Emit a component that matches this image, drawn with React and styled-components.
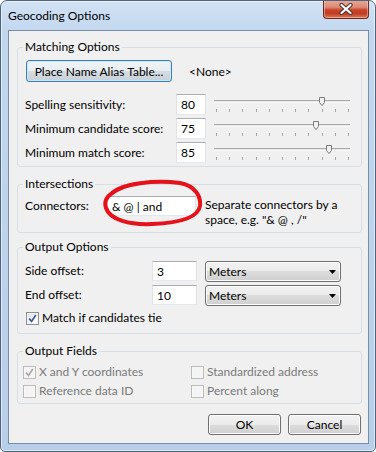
import React from "react";
import styled, { createGlobalStyle } from "styled-components";

const GlobalStyle = createGlobalStyle`
  html, body {
    margin: 0;
    padding: 0;
    background: #ffffff;
  }
  body {
    font-family: Lato, "Liberation Sans", Arial, sans-serif;
    font-size: 12px;
    color: #000;
  }
  *, *::before, *::after {
    box-sizing: border-box;
  }
`;

const sliders = [
  { label: "Spelling sensitivity:", value: 80 },
  { label: "Minimum candidate score:", value: 75 },
  { label: "Minimum match score:", value: 85 },
];

const offsets = [
  { label: "Side offset:", value: "3", unit: "Meters" },
  { label: "End offset:", value: "10", unit: "Meters" },
];

const fields = [
  { label: "X and Y coordinates", checked: true },
  { label: "Standardized address", checked: false },
  { label: "Reference data ID", checked: false },
  { label: "Percent along", checked: false },
];

function CheckBox({ checked, disabled }) {
  return (
    <Box $disabled={disabled}>
      {checked && (
        <svg width="9" height="9" viewBox="0 0 9 9">
          <path
            d="M1.2 4.6 L3.6 7.4 L7.8 1"
            fill="none"
            stroke={disabled ? "#a9a9a9" : "#3d5a98"}
            strokeWidth="1.7"
          />
        </svg>
      )}
    </Box>
  );
}

function Slider({ value }) {
  return (
    <SliderBody>
      <Track />
      <Ticks>
        {Array.from({ length: 11 }).map((_, i) => (
          <Tick key={i} />
        ))}
      </Ticks>
      <Thumb style={{ left: 2 + (value / 100) * 133 - 3 }}>
        <svg width="6" height="9" viewBox="0 0 6 9">
          <path
            d="M0.5 0.5 H5.5 V5.5 L3 8.5 L0.5 5.5 Z"
            fill="#f1f1f1"
            stroke="#7a7a7a"
            strokeWidth="1"
          />
        </svg>
      </Thumb>
    </SliderBody>
  );
}

export default function App() {
  return (
    <>
      <GlobalStyle />
      <Window>
        <TitleBar>
          <Title>Geocoding Options</Title>
          <CloseButton aria-label="Close">
            <svg width="14" height="12" viewBox="0 0 14 12">
              <path
                d="M2.5 2 L11.5 10 M11.5 2 L2.5 10"
                stroke="#4a3330"
                strokeWidth="4.2"
                strokeLinecap="round"
              />
              <path
                d="M2.5 2 L11.5 10 M11.5 2 L2.5 10"
                stroke="#ffffff"
                strokeWidth="2.2"
                strokeLinecap="round"
              />
            </svg>
          </CloseButton>
        </TitleBar>
        <Client>
          <Group $mt={8} $pt={5} $pb={3}>
            <Legend>Matching Options</Legend>
            <AliasRow>
              <Button $w={146} $h={22} $focused>
                Place Name Alias Table...
              </Button>
              <span>&lt;None&gt;</span>
            </AliasRow>
            {sliders.map((s, i) => (
              <SliderRow key={s.label} $mt={i === 0 ? 12 : 3}>
                <RowLabel $lh={21}>{s.label}</RowLabel>
                <TextBox $h={21} defaultValue={s.value} readOnly />
                <Slider value={s.value} />
              </SliderRow>
            ))}
          </Group>

          <Group $mt={9} $pt={4} $pb={5}>
            <Legend>Intersections</Legend>
            <ConnectorRow>
              <RowLabel $lh={20}>Connectors:</RowLabel>
              <Circled>
                <TextBox $h={20} defaultValue="& @ | and" readOnly />
                <Scribble width="106" height="50" viewBox="0 0 106 50">
                  <path
                    d="M11 15 C 22 4, 55 1, 80 4 C 96 7, 101 18, 100 27 C 98 39, 80 44, 52 45 C 30 46, 10 41, 6 29 C 3 20, 9 14, 24 8"
                    fill="none"
                    stroke="#e5121b"
                    strokeWidth="4"
                    strokeLinecap="round"
                  />
                </Scribble>
              </Circled>
              <Hint>
                Separate connectors by a
                <br />
                space, e.g. "&amp; @ , /"
              </Hint>
            </ConnectorRow>
          </Group>

          <Group $mt={6} $pt={6} $pb={7}>
            <Legend>Output Options</Legend>
            {offsets.map((o, i) => (
              <OffsetRow key={o.label} $mt={i === 0 ? 0 : 3}>
                <RowLabel $lh={20}>{o.label}</RowLabel>
                <TextBox $h={20} defaultValue={o.value} readOnly />
                <Combo>
                  <span>{o.unit}</span>
                  <svg width="7" height="4" viewBox="0 0 7 4">
                    <path d="M0 0 H7 L3.5 4 Z" fill="#000" />
                  </svg>
                </Combo>
              </OffsetRow>
            ))}
            <CheckRow $mt={4} $ml={1}>
              <CheckBox checked />
              <span>Match if candidates tie</span>
            </CheckRow>
          </Group>

          <Group $mt={9} $pt={5} $pb={4}>
            <Legend>Output Fields</Legend>
            <FieldGrid>
              {fields.map((f) => (
                <CheckRow key={f.label} $disabled>
                  <CheckBox checked={f.checked} disabled />
                  <span>{f.label}</span>
                </CheckRow>
              ))}
            </FieldGrid>
          </Group>

          <Footer>
            <Button $w={73} $h={21}>
              OK
            </Button>
            <Button $w={73} $h={21}>
              Cancel
            </Button>
          </Footer>
        </Client>
      </Window>
    </>
  );
}

const Window = styled.div`
  width: 376px;
  height: 452px;
  display: flex;
  flex-direction: column;
  border: 1px solid #4d6380;
  border-radius: 7px 7px 5px 5px;
  background: linear-gradient(180deg, #d2e2f4 0px, #c2d7ef 30px, #b8cfe9 100%);
  box-shadow: inset 0 0 0 1px rgba(255, 255, 255, 0.55);
  overflow: hidden;
`;

const TitleBar = styled.div`
  height: 29px;
  flex: none;
  display: flex;
  align-items: center;
  justify-content: space-between;
  padding: 0 6px 0 7px;
`;

const Title = styled.div`
  font-size: 12px;
  color: #000;
`;

const CloseButton = styled.div`
  align-self: flex-start;
  margin-top: -1px;
  width: 46px;
  height: 19px;
  display: flex;
  align-items: center;
  justify-content: center;
  border: 1px solid #6b2a20;
  border-top: none;
  border-radius: 0 0 4px 4px;
  background: linear-gradient(
    180deg,
    #e9a998 0%,
    #dd8a75 40%,
    #c8442c 55%,
    #c13c24 75%,
    #df7a52 100%
  );
  box-shadow: inset 0 0 0 1px rgba(255, 220, 210, 0.45);
`;

const Client = styled.div`
  flex: 1;
  margin: 0 6px 7px 7px;
  padding: 0 6px 0 8px;
  border: 1px solid #7a8ca3;
  background: #f0f0f0;
  display: flex;
  flex-direction: column;
`;

const Group = styled.fieldset`
  margin: ${(p) => p.$mt}px 0 0;
  padding: ${(p) => p.$pt}px 7px ${(p) => p.$pb}px;
  border: 1px solid #d5dfe5;
  border-radius: 3px;
  min-width: 0;
`;

const Legend = styled.legend`
  margin-left: -2px;
  padding: 0 2px;
  line-height: 16px;
  font-size: 12px;
`;

const AliasRow = styled.div`
  display: flex;
  align-items: center;
  gap: 17px;
  padding-left: 1px;
`;

const Button = styled.button`
  font: inherit;
  color: #000;
  width: ${(p) => p.$w}px;
  height: ${(p) => p.$h}px;
  padding: 0;
  border: 1px solid ${(p) => (p.$focused ? "#3c7fb1" : "#707070")};
  border-radius: 3px;
  background: ${(p) =>
    p.$focused
      ? "linear-gradient(180deg, #f0f4f7 0%, #e8edf1 50%, #d6dde3 50%, #c8d1d8 100%)"
      : "linear-gradient(180deg, #f2f2f2 0%, #ebebeb 50%, #dddddd 50%, #cfcfcf 100%)"};
  box-shadow: inset 0 0 0 1px
    ${(p) => (p.$focused ? "#c9e7f7" : "#fcfcfc")};
`;

const RowLabel = styled.div`
  line-height: ${(p) => p.$lh}px;
  white-space: nowrap;
`;

const TextBox = styled.input`
  font: inherit;
  color: #000;
  width: 100%;
  height: ${(p) => p.$h}px;
  margin: 0;
  padding: 0 4px;
  background: #fff;
  border: 1px solid #e2e3ea;
  border-top-color: #abadb3;
  border-bottom-color: #e3e9ef;
  outline: none;
`;

const SliderRow = styled.div`
  display: grid;
  grid-template-columns: 151px 30px 144px;
  margin-top: ${(p) => p.$mt}px;
`;

const SliderBody = styled.div`
  position: relative;
  height: 21px;
  margin-left: 8px;
  padding-top: 6px;
`;

const Track = styled.div`
  height: 3px;
  background: #e7e7e7;
  border-top: 1px solid #a9a9a9;
  border-bottom: 1px solid #fafafa;
`;

const Ticks = styled.div`
  display: flex;
  justify-content: space-between;
  padding: 0 1px 0 2px;
  margin-top: 6px;
`;

const Tick = styled.span`
  width: 1px;
  height: 3px;
  background: #a8a8a8;
`;

const Thumb = styled.div`
  position: absolute;
  top: 3px;
  width: 6px;
  height: 9px;
  line-height: 0;
`;

const ConnectorRow = styled.div`
  display: grid;
  grid-template-columns: 82px 89px 1fr;
  align-items: start;
`;

const Circled = styled.div`
  position: relative;
`;

const Scribble = styled.svg`
  position: absolute;
  left: -7px;
  top: -17px;
  pointer-events: none;
`;

const Hint = styled.div`
  margin: 1px 0 0 9px;
  line-height: 15px;
`;

const OffsetRow = styled.div`
  display: grid;
  grid-template-columns: 127px 45px 144px;
  margin-top: ${(p) => p.$mt}px;
`;

const Combo = styled.div`
  height: 21px;
  margin-left: 8px;
  display: flex;
  align-items: center;
  justify-content: space-between;
  padding: 0 4px 0 3px;
  border: 1px solid #707070;
  border-radius: 3px;
  background: linear-gradient(180deg, #f2f2f2 0%, #ebebeb 50%, #dddddd 50%, #cfcfcf 100%);
  box-shadow: inset 0 0 0 1px #fcfcfc;
`;

const CheckRow = styled.div`
  display: flex;
  align-items: center;
  gap: 3px;
  line-height: 16px;
  margin-top: ${(p) => p.$mt || 0}px;
  margin-left: ${(p) => p.$ml || 0}px;
  color: ${(p) => (p.$disabled ? "#7a7a7a" : "#000")};
`;

const Box = styled.span`
  width: 13px;
  height: 13px;
  flex: none;
  display: inline-flex;
  align-items: center;
  justify-content: center;
  border: 1px solid ${(p) => (p.$disabled ? "#bcbcbc" : "#8e8f8f")};
  background: ${(p) =>
    p.$disabled
      ? "#f4f4f4"
      : "linear-gradient(135deg, #dcdee2 0%, #f6f6f6 60%, #ffffff 100%)"};
  box-shadow: inset 0 0 0 1px ${(p) => (p.$disabled ? "#f7f7f7" : "#f4f4f4")};
`;

const FieldGrid = styled.div`
  display: grid;
  grid-template-columns: 168px 1fr;
  row-gap: 3px;
  margin-left: -2px;
`;

const Footer = styled.div`
  display: flex;
  justify-content: flex-end;
  gap: 7px;
  margin-top: 10px;
  padding-right: 1px;
`;
